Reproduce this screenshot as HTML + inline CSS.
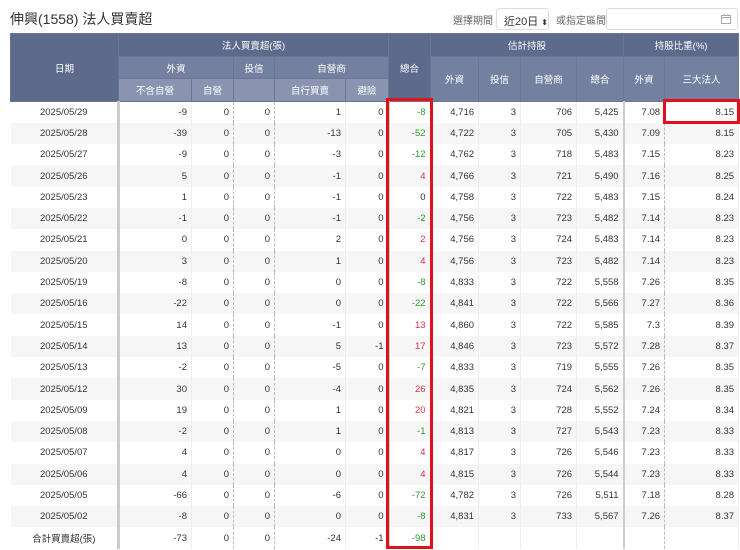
<!DOCTYPE html>
<html><head><meta charset="utf-8"><style>
*{margin:0;padding:0;box-sizing:border-box}
body{width:740px;height:550px;background:#fff;font-family:"Liberation Sans","Noto Sans CJK TC",sans-serif;position:relative;overflow:hidden;color:#333}
.title{position:absolute;left:10px;top:9px;font-size:14px;color:#333}
.ctl{position:absolute;top:12px;font-size:10px;color:#666}
.sel{position:absolute;left:496px;top:8px;width:53px;height:22px;border:1px solid #ddd;border-radius:3px;font-size:11px;color:#333;padding:4px 0 0 7px;white-space:nowrap}
.inp{position:absolute;left:606px;top:8px;width:132px;height:22px;border:1px solid #ddd;border-radius:3px}
table{position:absolute;left:10px;top:33px;border-collapse:collapse;table-layout:fixed;width:728px;font-size:9.5px}
th{color:#fff;font-weight:normal;font-size:9.5px;border:1px solid #6c7694}
th.a{background:#5e6a8c}th.b{background:#7480a0}th.c{background:#8a94b1}
td{text-align:right;padding-right:4px;height:21.3px;border-right:1px solid #eee;color:#333;white-space:nowrap}
td.d{text-align:center;padding:0}
tr:nth-child(even) td{background:#f6f6f6}
.g{color:#2a9a2a}.r{color:#e0304a}
.tk{border-right:3px solid #ccc}
.ds{border-right:1px dashed #bbb}
.gb{border-right:2px solid #ccc}
.box{position:absolute;border:3px solid #e0101c}
</style></head><body>
<div class="title">伸興(1558) 法人買賣超</div>
<div class="ctl" style="left:453px">選擇期間</div>
<div class="sel">近20日 <span style="font-size:8px">⬍</span></div>
<div class="ctl" style="left:556px">或指定區間</div>
<div class="inp"><svg style="position:absolute;right:6px;top:5px" width="10" height="10" viewBox="0 0 10 10"><rect x="0.5" y="1.5" width="9" height="8" fill="none" stroke="#aaa"/><line x1="0.5" y1="3.5" x2="9.5" y2="3.5" stroke="#aaa"/><line x1="3" y1="0" x2="3" y2="2" stroke="#aaa"/><line x1="7" y1="0" x2="7" y2="2" stroke="#aaa"/></svg></div>
<table>
<colgroup><col style="width:108px"><col style="width:73px"><col style="width:42px"><col style="width:41px"><col style="width:71px"><col style="width:43px"><col style="width:42px"><col style="width:48px"><col style="width:42px"><col style="width:56px"><col style="width:47px"><col style="width:41px"><col style="width:74px"></colgroup>
<tr style="height:23px"><th class="a" rowspan="3">日期</th><th class="a" colspan="5">法人買賣超(張)</th><th class="a" rowspan="3">總合</th><th class="a" colspan="4">估計持股</th><th class="a" colspan="2">持股比重(%)</th></tr>
<tr style="height:22px"><th class="b" colspan="2">外資</th><th class="b">投信</th><th class="b" colspan="2">自營商</th><th class="b" rowspan="2">外資</th><th class="b" rowspan="2">投信</th><th class="b" rowspan="2">自營商</th><th class="b" rowspan="2">總合</th><th class="b" rowspan="2">外資</th><th class="b" rowspan="2">三大法人</th></tr>
<tr style="height:23px"><th class="c">不含自營</th><th class="c">自營</th><th class="c"></th><th class="c">自行買賣</th><th class="c">避險</th></tr>
<tbody id="tb"></tbody>
</table>
<div class="box" style="left:386px;top:98px;width:47px;height:451px"></div>
<div class="box" style="left:663px;top:99px;width:77px;height:25px"></div>
<script>
var d=[
["2025/05/29",-9,0,0,1,0,-8,"4,716",3,706,"5,425","7.08","8.15"],
["2025/05/28",-39,0,0,-13,0,-52,"4,722",3,705,"5,430","7.09","8.15"],
["2025/05/27",-9,0,0,-3,0,-12,"4,762",3,718,"5,483","7.15","8.23"],
["2025/05/26",5,0,0,-1,0,4,"4,766",3,721,"5,490","7.16","8.25"],
["2025/05/23",1,0,0,-1,0,0,"4,758",3,722,"5,483","7.15","8.24"],
["2025/05/22",-1,0,0,-1,0,-2,"4,756",3,723,"5,482","7.14","8.23"],
["2025/05/21",0,0,0,2,0,2,"4,756",3,724,"5,483","7.14","8.23"],
["2025/05/20",3,0,0,1,0,4,"4,756",3,723,"5,482","7.14","8.23"],
["2025/05/19",-8,0,0,0,0,-8,"4,833",3,722,"5,558","7.26","8.35"],
["2025/05/16",-22,0,0,0,0,-22,"4,841",3,722,"5,566","7.27","8.36"],
["2025/05/15",14,0,0,-1,0,13,"4,860",3,722,"5,585","7.3","8.39"],
["2025/05/14",13,0,0,5,-1,17,"4,846",3,723,"5,572","7.28","8.37"],
["2025/05/13",-2,0,0,-5,0,-7,"4,833",3,719,"5,555","7.26","8.35"],
["2025/05/12",30,0,0,-4,0,26,"4,835",3,724,"5,562","7.26","8.35"],
["2025/05/09",19,0,0,1,0,20,"4,821",3,728,"5,552","7.24","8.34"],
["2025/05/08",-2,0,0,1,0,-1,"4,813",3,727,"5,543","7.23","8.33"],
["2025/05/07",4,0,0,0,0,4,"4,817",3,726,"5,546","7.23","8.33"],
["2025/05/06",4,0,0,0,0,4,"4,815",3,726,"5,544","7.23","8.33"],
["2025/05/05",-66,0,0,-6,0,-72,"4,782",3,726,"5,511","7.18","8.28"],
["2025/05/02",-8,0,0,0,0,-8,"4,831",3,733,"5,567","7.26","8.37"],
["合計買賣超(張)",-73,0,0,-24,-1,-98,"","","","","",""]];
var h="";d.forEach(function(r){h+="<tr>";r.forEach(function(v,i){var c=[];if(i==0)c.push("d tk");if(i==2||i==3)c.push("ds");if(i==5||i==6||i==10)c.push("gb");if(i==11)c.push("ds");if(i==6){if(v<0)c.push("g");else if(v>0)c.push("r");}h+='<td class="'+c.join(" ")+'">'+v+"</td>";});h+="</tr>";});
document.getElementById("tb").innerHTML=h;
</script>
</body></html>
